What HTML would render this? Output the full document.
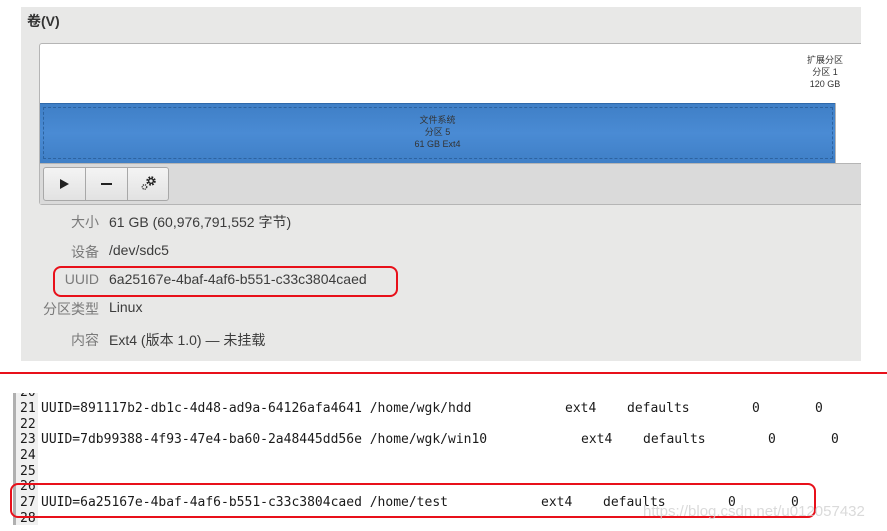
<!DOCTYPE html>
<html><head><meta charset="utf-8"><style>
*{margin:0;padding:0;box-sizing:border-box}
body{width:887px;height:531px;background:#fff;position:relative;overflow:hidden;font-family:"Liberation Sans","Noto Sans CJK SC",sans-serif}
.abs{position:absolute}
#panel{left:21px;top:7px;width:840px;height:354px;background:#e8e8e7}
.t{position:absolute;font-size:14px;color:#3c3c3c;white-space:nowrap}
.lab{position:absolute;font-size:14px;color:#7a7a7a;right:788px;white-space:nowrap}
.mono{position:absolute;font-family:"DejaVu Sans Mono","Liberation Mono",monospace;font-size:13px;color:#1a1a1a;white-space:pre;line-height:15px}
.sm{font-size:9px;color:#333;text-align:center;line-height:12px;position:absolute}
#code{position:absolute;left:0;top:393px;width:887px;height:138px;overflow:hidden}
</style></head><body>
<div id="panel" class="abs"></div>
<div class="t" style="left:27px;top:11px;font-weight:bold;font-size:14px;color:#333">卷(V)</div>
<div class="abs" style="left:39px;top:43px;width:830px;height:162px;border:1px solid #b5b5b5;border-radius:3px;background:#fff"></div>
<div class="abs" style="left:40px;top:103px;width:796px;height:60px;background:linear-gradient(#3f7fc6,#4a8bd4 50%,#3f7fc6);border-top:1px solid #2f69aa"></div>
<div class="abs" style="left:43px;top:107px;width:790px;height:52px;border:1px dashed #2d63a0"></div>
<div class="abs" style="left:835px;top:103px;width:1px;height:60px;background:#b5b5b5"></div>
<div class="abs" style="left:40px;top:163px;width:821px;height:41px;background:#dadada;border-top:1px solid #b5b5b5"></div>
<div class="abs" style="left:861px;top:0;width:26px;height:370px;background:#fff"></div>
<div class="sm" style="left:405px;top:114px;width:65px">文件系统<br>分区 5<br>61 GB Ext4</div>
<div class="sm" style="left:800px;top:54px;width:50px">扩展分区<br>分区 1<br>120 GB</div>
<div class="abs" style="left:43px;top:167px;width:126px;height:34px;border:1px solid #a8a8a8;border-radius:3px;background:linear-gradient(#f4f4f4,#e2e2e2)"></div>
<div class="abs" style="left:85px;top:168px;width:1px;height:32px;background:#a8a8a8"></div>
<div class="abs" style="left:127px;top:168px;width:1px;height:32px;background:#a8a8a8"></div>
<div class="abs" style="left:60px;top:179px;width:0;height:0;border-left:9px solid #222;border-top:5px solid transparent;border-bottom:5px solid transparent"></div>
<div class="abs" style="left:101px;top:183px;width:11px;height:2px;background:#222"></div>
<svg class="abs" style="left:140px;top:173px" width="20" height="20" viewBox="0 0 20 20">
<circle cx="11" cy="8" r="3.5" fill="none" stroke="#222" stroke-width="2.5" stroke-dasharray="1.6 1.2"/><circle cx="11" cy="8" r="2.3" fill="none" stroke="#222" stroke-width="1.3"/>
<circle cx="4.5" cy="14" r="2.2" fill="none" stroke="#333" stroke-width="1.4" stroke-dasharray="1.2 0.9"/>
</svg>
<div class="lab" style="top:212px">大小</div><div class="t" style="left:109px;top:212px">61 GB (60,976,791,552 字节)</div>
<div class="lab" style="top:242px">设备</div><div class="t" style="left:109px;top:242px">/dev/sdc5</div>
<div class="lab" style="top:271px">UUID</div><div class="t" style="left:109px;top:271px">6a25167e-4baf-4af6-b551-c33c3804caed</div>
<div class="lab" style="top:299px">分区类型</div><div class="t" style="left:109px;top:299px">Linux</div>
<div class="lab" style="top:330px">内容</div><div class="t" style="left:109px;top:330px">Ext4 (版本 1.0) — 未挂载</div>
<div class="abs" style="left:53px;top:266px;width:345px;height:31px;border:2px solid #e8101a;border-radius:8px"></div>
<div class="abs" style="left:0;top:372px;width:887px;height:2px;background:#e8101a"></div>
<div id="code">
<div class="abs" style="left:13px;top:0;width:3px;height:132px;background:#b0b0b0"></div>
<div class="abs" style="left:16px;top:0;width:22px;height:132px;background:#f0f0f0"></div>
<div class="mono" style="left:20px;top:-8px">20</div>
<div class="mono" style="left:20px;top:8px">21</div><div class="mono" style="left:41px;top:8px">UUID=891117b2-db1c-4d48-ad9a-64126afa4641 /home/wgk/hdd</div>
<div class="mono" style="left:565px;top:8px">ext4</div><div class="mono" style="left:627px;top:8px">defaults</div><div class="mono" style="left:752px;top:8px">0</div><div class="mono" style="left:815px;top:8px">0</div>
<div class="mono" style="left:20px;top:24px">22</div>
<div class="mono" style="left:20px;top:39px">23</div><div class="mono" style="left:41px;top:39px">UUID=7db99388-4f93-47e4-ba60-2a48445dd56e /home/wgk/win10</div>
<div class="mono" style="left:581px;top:39px">ext4</div><div class="mono" style="left:643px;top:39px">defaults</div><div class="mono" style="left:768px;top:39px">0</div><div class="mono" style="left:831px;top:39px">0</div>
<div class="mono" style="left:20px;top:55px">24</div>
<div class="mono" style="left:20px;top:71px">25</div>
<div class="mono" style="left:20px;top:86px">26</div>
<div class="mono" style="left:20px;top:102px">27</div><div class="mono" style="left:41px;top:102px">UUID=6a25167e-4baf-4af6-b551-c33c3804caed /home/test</div>
<div class="mono" style="left:541px;top:102px">ext4</div><div class="mono" style="left:603px;top:102px">defaults</div><div class="mono" style="left:728px;top:102px">0</div><div class="mono" style="left:791px;top:102px">0</div>
<div class="mono" style="left:20px;top:118px">28</div>
</div>
<div class="abs" style="left:10px;top:483px;width:806px;height:35px;border:2px solid #e8101a;border-radius:8px"></div>
<div class="abs" style="left:643px;top:503px;font-size:15px;color:rgba(205,205,205,0.75);font-family:'Liberation Sans',sans-serif;white-space:nowrap">https://blog.csdn.net/u012057432</div>
</body></html>
